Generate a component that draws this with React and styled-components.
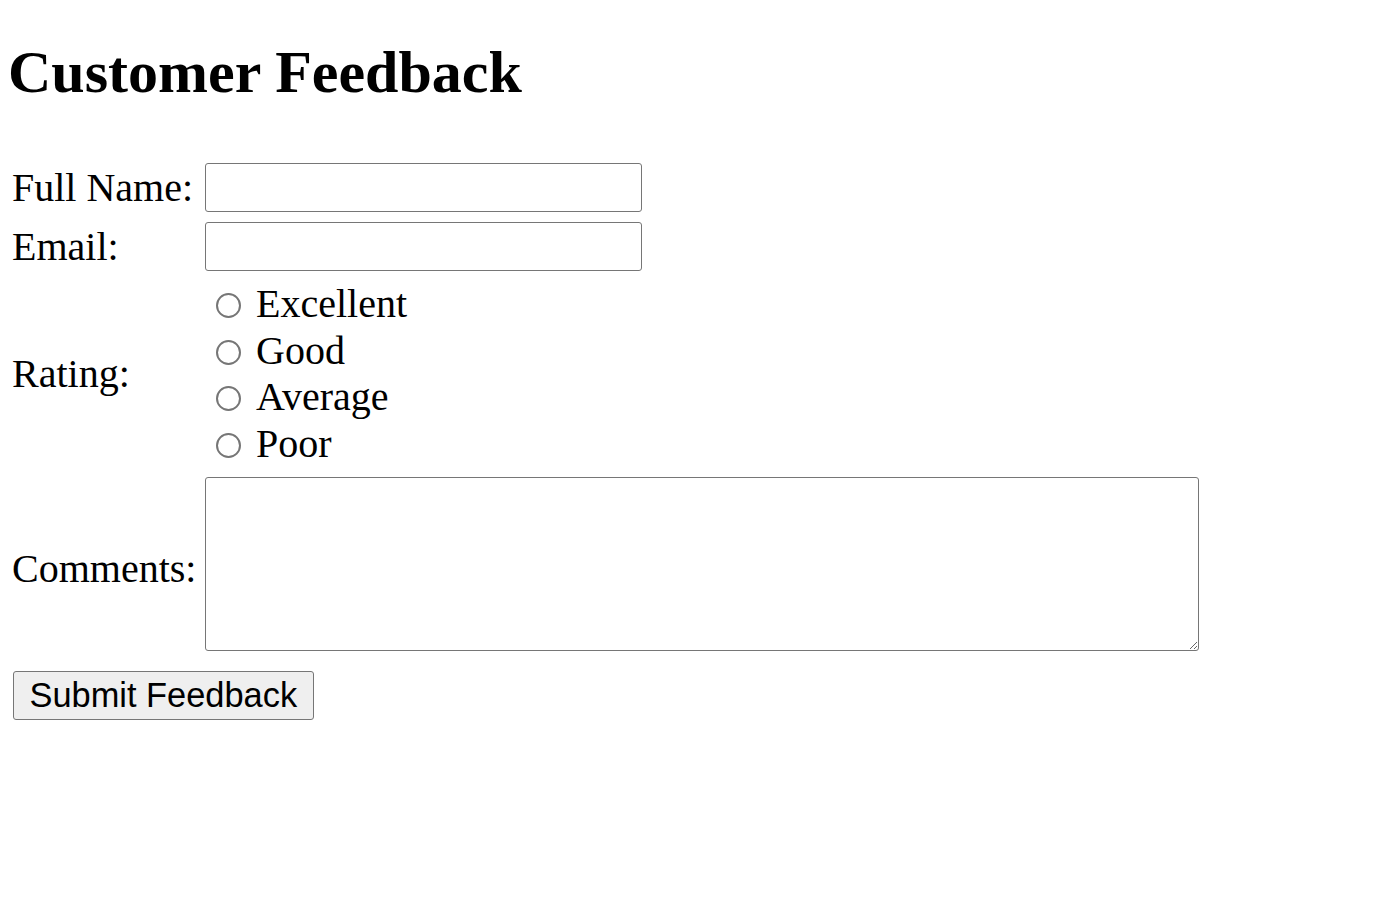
import React from "react";
import styled, { createGlobalStyle } from "styled-components";

const GlobalStyle = createGlobalStyle`
  body {
    margin: 0;
    background: #fff;
    color: #000;
    font-family: "Liberation Serif", "Times New Roman", serif;
  }
`;

const Page = styled.div`
  padding: 8px;
`;

const Title = styled.h1`
  margin: 30px 0 56px;
  font-size: 60px;
  font-weight: bold;
  line-height: 69px;
`;

const FormGrid = styled.form`
  display: grid;
  grid-template-columns: 193px auto;
  row-gap: 10px;
  padding-left: 4px;
  justify-content: start;
  align-items: center;
`;

const Label = styled.label`
  font-size: 40px;
  line-height: 46px;
  padding-top: ${(p) => p.$drop || 0}px;
`;

const TextField = styled.input`
  box-sizing: border-box;
  width: 437px;
  height: 49px;
  margin: 0;
  padding: 1px 4px;
  border: 1px solid #767676;
  border-radius: 3px;
  font-family: "Liberation Sans", Arial, sans-serif;
  font-size: 24px;
`;

const RadioGroup = styled.div`
  display: flex;
  flex-direction: column;
`;

const Option = styled.label`
  display: flex;
  align-items: center;
  gap: 15px;
  height: 46.5px;
  font-size: 40px;
  line-height: 46.5px;
`;

const Radio = styled.input`
  appearance: none;
  box-sizing: border-box;
  width: 25px;
  height: 25px;
  margin: 3px 0 0 11px;
  border: 2px solid #767676;
  border-radius: 50%;
  background: #fff;

  &:checked {
    background: radial-gradient(circle, #0075ff 45%, #fff 50%);
    border-color: #0075ff;
  }
`;

const CommentBox = styled.textarea`
  box-sizing: border-box;
  width: 994px;
  height: 174px;
  margin: 0;
  border: 1px solid #767676;
  border-radius: 3px;
  font-family: "Liberation Mono", monospace;
  font-size: 20px;
`;

const SubmitButton = styled.button`
  box-sizing: border-box;
  height: 49px;
  margin: 20px 0 0 5px;
  padding: 0 15.5px;
  border: 1px solid #767676;
  border-radius: 3px;
  background: #efefef;
  color: #000;
  font-family: "Liberation Sans", Arial, sans-serif;
  font-size: 34.4px;
  line-height: 39px;
`;

const ratings = ["Excellent", "Good", "Average", "Poor"];

const App = () => {
  return (
    <Page>
      <GlobalStyle />
      <Title>Customer Feedback</Title>
      <FormGrid onSubmit={(e) => e.preventDefault()}>
        <Label htmlFor="name">Full Name:</Label>
        <TextField id="name" type="text" />

        <Label htmlFor="email">Email:</Label>
        <TextField id="email" type="email" />

        <Label>Rating:</Label>
        <RadioGroup>
          {ratings.map((r) => (
            <Option key={r}>
              <Radio type="radio" name="rating" value={r} />
              {r}
            </Option>
          ))}
        </RadioGroup>

        <Label htmlFor="comments" $drop={10}>
          Comments:
        </Label>
        <CommentBox id="comments" />
      </FormGrid>
      <SubmitButton type="submit">Submit Feedback</SubmitButton>
    </Page>
  );
};

export default App;
